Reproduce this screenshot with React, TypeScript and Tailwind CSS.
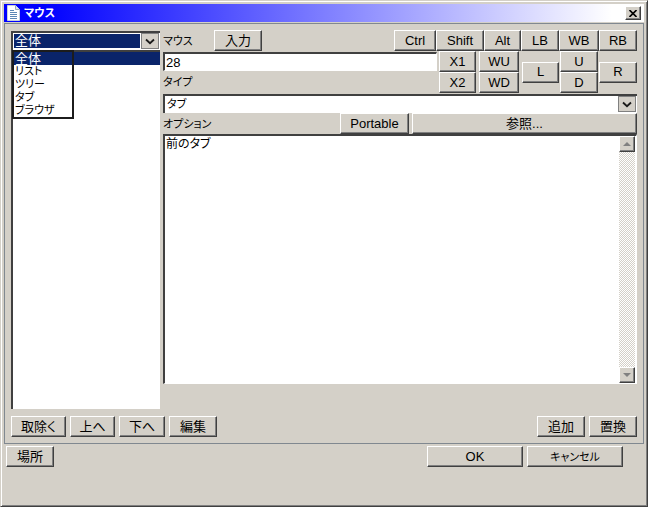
import type { ComponentProps, ReactNode } from 'react'
import { useState } from 'react'

import clsx from 'clsx'

const scopes = ['全体', 'リスト', 'ツリー', 'タブ', 'ブラウザ']
const modifiers = [
  { name: 'Ctrl', width: 'w-[42px]' },
  { name: 'Shift', width: 'w-12' },
  { name: 'Alt', width: 'w-[37px]' },
  { name: 'LB', width: 'w-[38px]' },
  { name: 'WB', width: 'w-10' },
  { name: 'RB', width: 'w-[38px]' },
]

const raised =
  'border border-t-white border-l-white border-r-[#404040] border-b-[#404040] bg-[#d4d0c8] shadow-[inset_-1px_-1px_0_#808080]'
const sunken =
  'border-t-2 border-l-2 border-t-[#404040] border-l-[#404040] bg-white'

function Button({ className, ...props }: ComponentProps<'button'>) {
  return (
    <button
      type="button"
      className={clsx(
        'flex h-[21px] shrink-0 items-center justify-center whitespace-nowrap',
        raised,
        className
      )}
      {...props}
    />
  )
}

function DropArrow() {
  return (
    <span className="pointer-events-none flex w-[18px] shrink-0 items-center justify-center border border-[#808080] bg-[#d4d0c8]">
      <svg width="10" height="7" viewBox="0 0 10 7" fill="none">
        <path d="M1 1.5 5 5.2 9 1.5" stroke="#1a1a1a" strokeWidth="1.8" />
      </svg>
    </span>
  )
}

type ComboProps = ComponentProps<'select'> & {
  highlighted?: boolean
  children: ReactNode
}

function Combo({ highlighted, children, ...props }: ComboProps) {
  return (
    <div className={clsx('flex h-[19px] pr-px pb-px', sunken)}>
      <select
        className={clsx(
          'min-w-0 flex-1 appearance-none border border-white pl-px leading-[14px] outline-none',
          highlighted
            ? 'bg-[#0a246a] text-white'
            : 'bg-white text-[11px] text-black'
        )}
        {...props}
      >
        {children}
      </select>
      <DropArrow />
    </div>
  )
}

function ScrollButton({ down }: { down?: boolean }) {
  return (
    <button
      type="button"
      aria-label={down ? '下へスクロール' : '上へスクロール'}
      className={clsx('flex h-4 w-4 items-center justify-center', raised)}
    >
      <svg width="8" height="4" viewBox="0 0 8 4">
        <path d={down ? 'M0 0h8L4 4z' : 'M0 4h8L4 0z'} fill="#808080" />
      </svg>
    </button>
  )
}

function TitleBar() {
  return (
    <header className="flex h-[18px] items-center bg-linear-to-r/srgb from-[#0000ff] from-6% to-white to-95% px-[3px]">
      <svg width="14" height="16" viewBox="0 0 14 16">
        <path d="M.5.5h8l4 4v11H.5z" fill="#fff" stroke="#c8d0dc" />
        <path d="M8.5.5v4h4" fill="#dde6f0" stroke="#9aa8bc" />
        <path d="M3 5.5h4M3 7.5h7M3 9.5h7M3 11.5h7M3 13.5h7" stroke="#5d87b5" />
      </svg>
      <h1 className="ml-[3px] flex-1 text-[11px] font-bold text-white">
        マウス
      </h1>
      <button
        type="button"
        aria-label="閉じる"
        className={clsx('flex h-[14px] w-4 items-center justify-center', raised)}
      >
        <svg width="8" height="7" viewBox="0 0 8 7">
          <path d="M.5 0 7.5 7M7.5 0 .5 7" stroke="#000" strokeWidth="1.6" />
        </svg>
      </button>
    </header>
  )
}

function ScopeList() {
  const [scope, setScope] = useState('全体')

  return (
    <div className="flex w-[149px] shrink-0 flex-col pt-px">
      <Combo
        highlighted
        aria-label="範囲"
        value={scope}
        onChange={(e) => setScope(e.target.value)}
      >
        {scopes.map((name) => (
          <option key={name}>{name}</option>
        ))}
      </Combo>
      <div className={clsx('relative flex-1', sunken)}>
        <ul role="listbox" aria-label="範囲の一覧">
          {scopes.map((name) => (
            <li
              key={name}
              role="option"
              aria-selected={name === scope}
              onClick={() => setScope(name)}
              className={clsx(
                'h-[13px] pl-0.5 leading-[13px]',
                name === scope ? 'bg-[#0a246a] text-white' : 'text-[11px]'
              )}
            >
              {name}
            </li>
          ))}
        </ul>
        <div className="pointer-events-none absolute -top-0.5 -left-px h-[69px] w-[62px] border-2 border-[#1c1c1c]" />
      </div>
    </div>
  )
}

function MouseSettings() {
  return (
    <div className="flex min-w-0 flex-1 flex-col">
      <div className="flex items-center">
        <label htmlFor="mouse" className="w-[51px] text-[11px]">
          マウス
        </label>
        <Button className="w-12">入力</Button>
        <div className="ml-auto flex">
          {modifiers.map(({ name, width }) => (
            <Button key={name} className={width}>
              {name}
            </Button>
          ))}
        </div>
      </div>

      <div className="flex">
        <div className="flex min-w-0 flex-1 flex-col pt-px">
          <input
            id="mouse"
            defaultValue="28"
            className={clsx(
              'h-[19px] w-full border-r border-b border-r-white border-b-white pl-px leading-[14px] outline-none',
              sunken
            )}
          />
          <label htmlFor="type" className="flex h-[22px] items-center text-[11px]">
            タイプ
          </label>
        </div>
        <div className="ml-0.5 flex items-center">
          <div className="mr-[3px]">
            <Button className="w-[37px]">X1</Button>
            <Button className="w-[37px]">X2</Button>
          </div>
          <div className="mr-[3px]">
            <Button className="w-10">WU</Button>
            <Button className="w-10">WD</Button>
          </div>
          <Button className="w-[37px]">L</Button>
          <div className="mx-px">
            <Button className="w-[38px]">U</Button>
            <Button className="w-[38px]">D</Button>
          </div>
          <Button className="w-[38px]">R</Button>
        </div>
      </div>

      <div className="pt-px">
        <Combo id="type" defaultValue="タブ">
          <option>タブ</option>
        </Combo>
      </div>

      <div className="flex items-center gap-[3px]">
        <label htmlFor="option" className="flex-1 text-[11px]">
          オプション
        </label>
        <Button className="w-[69px]">Portable</Button>
        <Button className="w-[225px]">参照...</Button>
      </div>

      <div
        className={clsx(
          'flex h-[250px] border-r border-b border-r-white border-b-white pr-px',
          sunken
        )}
      >
        <textarea
          id="option"
          defaultValue="前のタブ"
          className="min-w-0 flex-1 resize-none overflow-hidden px-px pt-px text-[12px] leading-[14px] outline-none"
        />
        <div className="flex w-4 shrink-0 flex-col justify-between bg-[repeating-conic-gradient(#fff_0_25%,#d4d0c8_0_50%)] bg-[length:2px_2px]">
          <ScrollButton />
          <ScrollButton down />
        </div>
      </div>
    </div>
  )
}

export default function App() {
  return (
    <div className="flex min-h-screen flex-col border border-t-[#d4d0c8] border-r-[#404040] border-b-[#404040] border-l-[#d4d0c8] bg-[#d4d0c8] p-[3px] font-['Liberation_Sans','Noto_Sans_CJK_JP',sans-serif] text-[13px] leading-[14px] text-black shadow-[inset_1px_1px_0_#fff,inset_-1px_-1px_0_#808080] [font-feature-settings:'palt']">
      <TitleBar />

      <main className="mt-px border border-[#808890] p-1.5">
        <div className="flex h-[379px] gap-[3px]">
          <ScopeList />
          <MouseSettings />
        </div>
        <div className="mt-[7px] flex gap-1">
          <Button className="w-[55px]">取除く</Button>
          <Button className="w-[45px]">上へ</Button>
          <Button className="w-[46px]">下へ</Button>
          <Button className="w-12">編集</Button>
          <Button className="ml-auto w-12">追加</Button>
          <Button className="w-12">置換</Button>
        </div>
      </main>

      <footer className="mt-0.5 flex gap-1 pr-[21px] pl-0.5">
        <Button className="w-12">場所</Button>
        <Button className="ml-auto w-24">OK</Button>
        <Button className="w-24 text-[11px]">キャンセル</Button>
      </footer>
    </div>
  )
}
